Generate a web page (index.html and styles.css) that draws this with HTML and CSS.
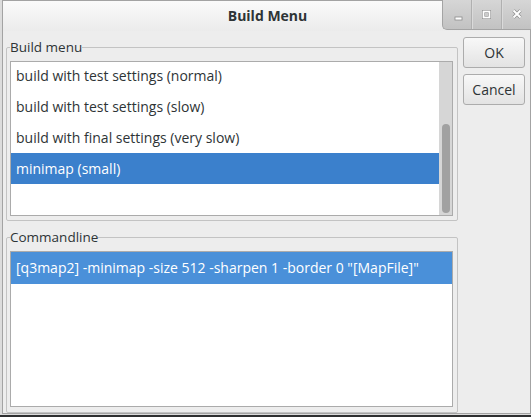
FILE: index.html
```html
<!DOCTYPE html>
<html>
<head>
<meta charset="utf-8">
<title>Build Menu</title>
<link rel="stylesheet" href="styles.css">
</head>
<body>
<div class="window">
  <div class="titlebar">
    <div class="title">Build Menu</div>
    <div class="controls">
      <div class="ctl">
        <svg width="9" height="5" viewBox="0 0 9 5"><rect x="1" y="1" width="7" height="3" fill="#fff" stroke="#8c8c8c" stroke-width="0.8"/></svg>
      </div>
      <div class="ctl">
        <svg width="9" height="9" viewBox="0 0 9 9"><rect x="1.5" y="1.5" width="6" height="6" fill="none" stroke="#8c8c8c" stroke-width="3"/><rect x="1.5" y="1.5" width="6" height="6" fill="none" stroke="#fff" stroke-width="1.8"/></svg>
      </div>
      <div class="ctl">
        <svg width="10" height="10" viewBox="0 0 10 10"><path d="M1.5 1.5 L8.5 8.5 M8.5 1.5 L1.5 8.5" stroke="#8c8c8c" stroke-width="3.2"/><path d="M1.5 1.5 L8.5 8.5 M8.5 1.5 L1.5 8.5" stroke="#fff" stroke-width="2"/></svg>
      </div>
    </div>
  </div>
  <div class="content">
    <div class="frames">
      <fieldset class="frame build">
        <legend>Build menu</legend>
        <div class="listbox">
          <div class="viewport">
            <div class="rows">
              <div class="row">build with test settings (normal)</div>
              <div class="row">build with test settings (slow)</div>
              <div class="row">build with final settings (very slow)</div>
              <div class="row selected">minimap (small)</div>
            </div>
          </div>
          <div class="scrollbar"><div class="thumb"></div></div>
        </div>
      </fieldset>
      <fieldset class="frame cmd">
        <legend>Commandline</legend>
        <div class="cmdbox">
          <div class="row cmdsel">[q3map2] -minimap -size 512 -sharpen 1 -border 0 "[MapFile]"</div>
        </div>
      </fieldset>
    </div>
    <div class="buttons">
      <button class="btn">OK</button>
      <button class="btn">Cancel</button>
    </div>
  </div>
</div>
</body>
</html>
```

FILE: styles.css
```css
html, body {
  margin: 0;
  padding: 0;
}
body {
  width: 531px;
  height: 417px;
  overflow: hidden;
  background: linear-gradient(to bottom, #dcdcdc 0, #dcdcdc 415px, #2e2f30 415px);
  font-family: "Open Sans", "DejaVu Sans", sans-serif;
  font-size: 13.5px;
  color: #2e3436;
}
.window {
  box-sizing: border-box;
  margin-left: 2px;
  width: 529px;
  height: 414px;
  border: 1px solid #a3a3a3;
  background: #ededed;
  display: flex;
  flex-direction: column;
}
.titlebar {
  position: relative;
  height: 30px;
  flex: none;
  background: linear-gradient(to bottom, #fafafa, #ebebeb);
}
.title {
  text-align: center;
  line-height: 30px;
  font-weight: bold;
  font-size: 14px;
  color: #2e3436;
  padding-left: 2px;
}
.controls {
  position: absolute;
  top: -1px;
  right: -1px;
  height: 29px;
  display: flex;
  border-left: 1px solid #a4a4a4;
  border-bottom: 1px solid #a4a4a4;
  border-bottom-left-radius: 5px;
  background: linear-gradient(to bottom, #d6d6d6, #c2c2c2);
  overflow: hidden;
}
.ctl {
  width: 29px;
  display: flex;
  align-items: center;
  justify-content: center;
  border-left: 1px solid #b0b0b0;
  box-shadow: inset 1px 0 0 #dadada;
}
.ctl:first-child {
  border-left: none;
  box-shadow: none;
  width: 28px;
}
.ctl:first-child svg {
  margin-top: 8px;
  margin-left: 3px;
}
.ctl:nth-child(2) svg {
  margin-top: -1px;
}
.ctl:last-child svg {
  margin-top: -1px;
}
.content {
  flex: 1;
  display: flex;
  gap: 5px;
  padding: 6px 5px 0 3px;
}
.frames {
  width: 452px;
  display: flex;
  flex-direction: column;
  gap: 7px;
  margin-top: 1px;
}
.frame {
  margin: 0;
  border: 1px solid #c3c3c3;
  border-radius: 2px;
  padding: 5px 4px 4px 3px;
  min-width: 0;
}
.frame legend {
  padding: 0;
  line-height: 18px;
  margin-left: 0;
}
.listbox {
  height: 155px;
  box-sizing: border-box;
  border: 1px solid #ababab;
  background: #fff;
  display: flex;
}
.viewport {
  flex: 1;
  overflow: hidden;
}
.rows {
  margin-top: -2px;
}
.row {
  height: 31px;
  line-height: 31px;
  padding-left: 5px;
  white-space: nowrap;
  font-size: 14px;
}
.row.selected {
  background: #3b80cc;
  color: #fff;
}
.scrollbar {
  width: 13px;
  background: #d6d6d6;
  padding: 62px 2px 2px 3px;
  box-sizing: border-box;
  display: flex;
}
.thumb {
  flex: 1;
  background: #a1a1a1;
  border-radius: 4px;
}
.cmd {
  flex: 1;
  display: flex;
  flex-direction: column;
}
.cmdbox {
  height: 156px;
  box-sizing: border-box;
  border: 1px solid #ababab;
  background: #fff;
}
.row.cmdsel {
  background: #4a90d9;
  color: #fff;
  height: 32px;
  line-height: 32px;
}
.buttons {
  width: 62px;
  display: flex;
  flex-direction: column;
  gap: 6px;
}
.btn {
  height: 31px;
  margin: 0;
  padding: 0;
  border: 1px solid #acacac;
  border-radius: 3px;
  background: linear-gradient(to bottom, #f8f8f8, #e3e3e3);
  font-family: "Open Sans", "DejaVu Sans", sans-serif;
  font-size: 14px;
  color: #2e3436;
}
```
